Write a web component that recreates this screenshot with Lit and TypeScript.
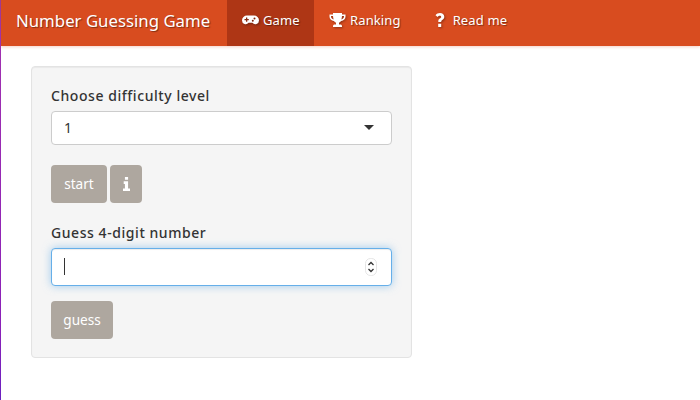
import { css, html, LitElement } from 'lit';
import { customElement } from 'lit/decorators.js';

@customElement('app-root')
export class AppRoot extends LitElement {
  static styles = css`
    :host {
      display: block;
      position: relative;
      height: 400px;
      overflow: hidden;
      background: #fff;
      font-family: "Noto Sans", "Open Sans", sans-serif;
      color: #333;
    }
    .edge {
      position: absolute;
      left: 0;
      top: 0;
      bottom: 0;
      width: 1px;
      background: linear-gradient(#a03a90 0, #a030b0 46px, #8a20b8 330px, #6a20c0 400px);
    }
    nav {
      display: flex;
      height: 46px;
      background: #d84c1f;
      box-shadow: 0 1px 3px rgba(216, 76, 31, 0.25);
      color: #fff;
      text-shadow: 1px 1px 1px rgba(0, 0, 0, 0.4);
    }
    .brand {
      box-sizing: border-box;
      width: 227px;
      font-size: 16.8px;
      line-height: 41px;
      padding-left: 16px;
      white-space: nowrap;
    }
    .tab {
      display: flex;
      align-items: center;
      gap: 4px;
      padding: 0 15px 6px;
      font-size: 13px;
      letter-spacing: 0.01em;
    }
    .tab.active {
      box-sizing: border-box;
      width: 87px;
      padding-right: 0;
      background: #ae3615;
    }
    .tab svg {
      fill: #fff;
      filter: drop-shadow(1px 1px 1px rgba(0, 0, 0, 0.35));
    }
    main {
      padding: 20px 0 0 31px;
    }
    .well {
      box-sizing: border-box;
      width: 381px;
      height: 292px;
      padding: 19px;
      background: #f5f5f5;
      border: 1px solid #e3e3e3;
      border-radius: 4px;
      box-shadow: inset 0 1px 1px rgba(0, 0, 0, 0.05);
    }
    label {
      display: block;
      font-size: 14px;
      font-weight: 500;
      line-height: 20px;
      letter-spacing: 0.04em;
      color: #333;
    }
    .first {
      margin-bottom: 5px;
    }
    .select {
      box-sizing: border-box;
      display: flex;
      align-items: center;
      justify-content: space-between;
      height: 34px;
      padding: 0 17px 2px 12px;
      background: #fff;
      border: 1px solid #ccc;
      border-radius: 4px;
      font-size: 14px;
    }
    .caret {
      width: 0;
      height: 0;
      border-left: 5px solid transparent;
      border-right: 5px solid transparent;
      border-top: 5px solid #333;
    }
    .actions {
      display: flex;
      gap: 3px;
      margin-top: 20px;
    }
    button {
      box-sizing: border-box;
      display: flex;
      align-items: center;
      justify-content: center;
      height: 38px;
      padding: 0 0 2px;
      background: #aea79f;
      border: 1px solid #fff0;
      border-radius: 4px;
      color: #fff;
      font: inherit;
      font-size: 13.6px;
    }
    .start {
      width: 56px;
    }
    .info {
      width: 32px;
      padding: 0;
    }
    .second {
      margin: 20px 0 5px;
    }
    .number {
      position: relative;
      height: 38px;
    }
    input {
      box-sizing: border-box;
      display: block;
      width: 100%;
      height: 100%;
      background: #fff;
      border: 1px solid #66afe9;
      border-radius: 4px;
      outline: none;
      box-shadow: inset 0 1px 1px rgba(0, 0, 0, 0.075), 0 0 8px rgba(102, 175, 233, 0.6);
      caret-color: transparent;
    }
    .cursor {
      position: absolute;
      left: 13px;
      top: 10px;
      width: 1px;
      height: 17px;
      background: #333;
    }
    .spin {
      position: absolute;
      right: 15px;
      top: 10px;
    }
    .guess {
      width: 62px;
      margin-top: 15px;
    }
  `;

  render() {
    return html`
      <nav>
        <div class="brand">Number Guessing Game</div>
        <div class="tab active">
          <svg width="17" height="12" viewBox="0 0 17 12">
            <path fill-rule="evenodd" d="M5 1.5h7a5 5 0 0 1 5 5 3.7 3.7 0 0 1-6.6 2.3H6.6A3.7 3.7 0 0 1 0 6.500a5 5 0 0 1 5-5zM4 3.500v1.500H2.500v1.300H4v1.500h1.300V6.300h1.500V5H5.300V3.500zM12.500 3.600a1 1 0 1 0 0 2 1 1 0 0 0 0-2zM10.800 5.800a1 1 0 1 0 0 2 1 1 0 0 0 0-2z" />
          </svg>
          Game
        </div>
        <div class="tab">
          <svg width="17" height="15" viewBox="-0.500 0 17 15">
            <path fill-rule="evenodd" d="M3.500 0h9v1.500H16v2.300c0 2.200-1.800 3.900-4.400 4.200-.6.800-1.300 1.400-2.100 1.700v1.800h1.300c1 0 1.700.7 1.700 1.700v.8H3.500v-.8c0-1 .7-1.700 1.700-1.700h1.300V9.700C5.700 9.400 5 8.800 4.400 8 1.800 7.700 0 6 0 3.800V1.500h3.500zM1.500 3v.8c0 1.200 1 2.200 2.600 2.600-.3-1-.5-2.100-.6-3.400zM14.500 3h-2c-.1 1.300-.3 2.400-.6 3.400 1.600-.4 2.600-1.400 2.600-2.600z" />
          </svg>
          Ranking
        </div>
        <div class="tab">
          <svg width="18" height="15" viewBox="0 0 18 15">
            <path transform="translate(0.800 0)" d="M8.200 0c2.400 0 4.300 1.500 4.300 3.800 0 1.800-1 2.600-2.100 3.300-.7.500-1 .8-1 1.500v.4H6.500V8.200c0-1.300.6-2 1.500-2.600.8-.5 1.400-.9 1.400-1.600 0-.8-.6-1.200-1.400-1.200-.9 0-1.600.5-2.200 1.300L3.700 2.200C4.700.8 6.200 0 8.200 0zM6.400 10.800h3v3.200h-3z" />
          </svg>
          Read me
        </div>
      </nav>
      <main>
        <div class="well">
          <label class="first">Choose difficulty level</label>
          <div class="select">1<span class="caret"></span></div>
          <div class="actions">
            <button class="start">start</button>
            <button class="info">
              <svg width="7" height="14" viewBox="0 0 8 15" preserveAspectRatio="none" fill="#fff">
                <path d="M2.200 0h3.600v3H2.200zM.8 4.600h5v7.600H8V15H0v-2.800h2.200V7.400H.8z" />
              </svg>
            </button>
          </div>
          <label class="second">Guess 4-digit number</label>
          <div class="number">
            <input type="text" />
            <span class="cursor"></span>
            <svg class="spin" width="12" height="18" viewBox="0 0 12 18">
              <rect x="0.500" y="0.500" width="11" height="17" rx="5" fill="#fff" stroke="#e4e4e4" />
              <path d="M3.500 7l2.500-2.500 2.500 2.500M3.500 11l2.500 2.500 2.500-2.500" fill="none" stroke="#333" stroke-width="1.300" />
            </svg>
          </div>
          <button class="guess">guess</button>
        </div>
      </main>
      <div class="edge"></div>
    `;
  }
}
